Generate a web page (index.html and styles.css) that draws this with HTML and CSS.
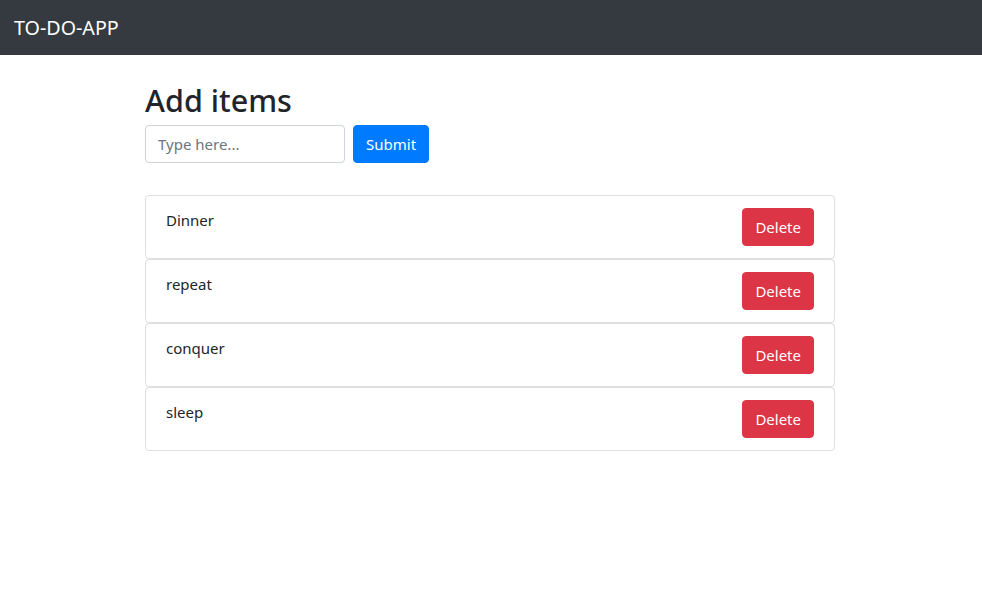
FILE: index.html
```html
<!DOCTYPE html>
<html lang="en">
<head>
<meta charset="utf-8">
<title>TO-DO-APP</title>
<link rel="stylesheet" href="styles.css">
</head>
<body>
<nav class="navbar">
  <span class="brand">TO-DO-APP</span>
</nav>
<main class="container">
  <h2 class="title">Add items</h2>
  <form class="add-form">
    <input class="text-input" type="text" placeholder="Type here...">
    <button class="btn btn-primary" type="button">Submit</button>
  </form>
  <ul class="items">
    <li class="item"><span class="item-text">Dinner</span><button class="btn btn-danger" type="button">Delete</button></li>
    <li class="item"><span class="item-text">repeat</span><button class="btn btn-danger" type="button">Delete</button></li>
    <li class="item"><span class="item-text">conquer</span><button class="btn btn-danger" type="button">Delete</button></li>
    <li class="item"><span class="item-text">sleep</span><button class="btn btn-danger" type="button">Delete</button></li>
  </ul>
</main>
</body>
</html>
```
FILE: styles.css
```css
* { box-sizing: border-box; }
html, body { margin: 0; padding: 0; }
body {
  font-family: "Noto Sans", "Open Sans", sans-serif;
  font-size: 16px;
  line-height: 24px;
  color: #212529;
  background: #fff;
}
.navbar {
  height: 55px;
  background: #343a40;
  display: flex;
  align-items: center;
  padding: 0 14px;
}
.brand {
  color: #fff;
  font-size: 19.7px;
  line-height: 30px;
}
.container {
  width: 690px;
  margin: 0 0 0 calc(50% - 346px);
  padding-top: 26px;
}
.title {
  margin: 0 0 6px;
  font-size: 30.5px;
  font-weight: 500;
  line-height: 38px;
}
.add-form {
  display: flex;
  gap: 8px;
  margin: 0 0 32px;
}
.text-input {
  width: 200px;
  height: 38px;
  padding: 6px 12px;
  border: 1px solid #ced4da;
  border-radius: 4px;
  font-family: inherit;
  font-size: 15px;
  color: #495057;
}
.text-input::placeholder { color: #6c757d; }
.btn {
  height: 38px;
  padding: 6px 12px;
  border: 1px solid transparent;
  border-radius: 4px;
  font-family: inherit;
  font-size: 15px;
  line-height: 24px;
  color: #fff;
}
.btn-primary { background: #007bff; border-color: #007bff; }
.btn-danger { background: #dc3545; border-color: #dc3545; }
.items {
  list-style: none;
  margin: 0;
  padding: 0;
  display: flex;
  flex-direction: column;
}
.item {
  display: flex;
  justify-content: space-between;
  align-items: flex-start;
  padding: 12px 20px;
  border: 1px solid rgba(0,0,0,.125);
  border-radius: 4px;
}
.item-text { font-size: 15px; }
```
